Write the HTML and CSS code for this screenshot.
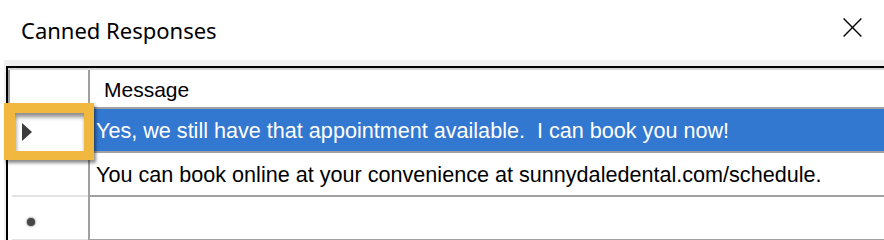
FILE: index.html
```html
<!DOCTYPE html>
<html lang="en">
<head>
<meta charset="utf-8">
<title>Canned Responses</title>
<link rel="stylesheet" href="styles.css">
</head>
<body>
<div class="titlebar">
  <span class="title">Canned Responses</span>
  <svg class="close" width="19" height="19" viewBox="0 0 19 19" aria-label="Close">
    <path d="M0.6 0.6 L18.4 18.4 M18.4 0.6 L0.6 18.4" stroke="#000" stroke-width="1.4" fill="none"/>
  </svg>
</div>
<div class="panel">
  <div class="grid">
    <div class="row row-header">
      <div class="rh"></div>
      <div class="cell">Message</div>
    </div>
    <div class="row selected">
      <div class="rh"><span class="current"></span></div>
      <div class="cell">Yes, we still have that appointment available.&nbsp; I can book you now!</div>
    </div>
    <div class="row">
      <div class="rh"></div>
      <div class="cell">You can book online at your convenience at sunnydaledental.com/schedule.</div>
    </div>
    <div class="row new-row">
      <div class="rh"><span class="new-mark"></span></div>
      <div class="cell"></div>
    </div>
  </div>
</div>
<div class="callout"></div>
</body>
</html>
```
FILE: styles.css
```css
html, body {
  margin: 0;
  padding: 0;
}
body {
  width: 884px;
  height: 240px;
  overflow: hidden;
  background: #ffffff;
  position: relative;
  font-family: "Liberation Sans", Arial, sans-serif;
  color: #000;
}
.titlebar {
  height: 60px;
  box-sizing: border-box;
  padding: 0 22px 0 21px;
  display: flex;
  align-items: center;
  justify-content: space-between;
}
.title {
  font-family: "Noto Sans", "Open Sans", sans-serif;
  font-size: 22px;
  color: #000;
}
.close {
  display: block;
  margin-top: -5px;
}
.panel {
  margin-left: 4px;
  height: 180px;
  box-sizing: border-box;
  padding: 6px 0 0 2px;
  background: #f0f0f0;
}
.grid {
  height: 100%;
  box-sizing: border-box;
  border-top: 2px solid #000;
  border-left: 2px solid #000;
  background: #fff;
  overflow: hidden;
}
.row {
  display: flex;
}
.rh {
  width: 82px;
  height: 44px;
  flex: none;
  box-sizing: border-box;
  border-right: 2px solid #a0a0a0;
  position: relative;
  display: flex;
  align-items: center;
}
.rh::after {
  content: "";
  position: absolute;
  left: 4px;
  right: 0;
  bottom: 0;
  height: 2px;
  background: #e3e3e3;
}
.cell {
  flex: 1;
  height: 44px;
  box-sizing: border-box;
  border-bottom: 2px solid #a0a0a0;
  display: flex;
  align-items: center;
  padding-left: 6px;
  padding-top: 2px;
  font-size: 21.6px;
  white-space: nowrap;
}
.row-header {
  border-top: 2px solid #d6d6d6;
}
.row-header .rh {
  height: 39px;
  border-left: 2px solid #a0a0a0;
  border-bottom: 2px solid #a0a0a0;
}
.row-header .rh::after {
  display: none;
}
.row-header .cell {
  height: 39px;
  padding-left: 14px;
  padding-top: 2px;
  font-size: 21px;
}
.selected .cell {
  background: #3378d0;
  color: #fff;
}
.current {
  width: 0;
  height: 0;
  margin-left: 14px;
  margin-top: 2px;
  border-left: 10px solid #3c3c3c;
  border-top: 9px solid transparent;
  border-bottom: 9px solid transparent;
}
.new-mark {
  width: 8px;
  height: 8px;
  margin-left: 19px;
  margin-top: 6px;
  border-radius: 50%;
  background: #464646;
  box-shadow: 0 0 1.5px 1px rgba(70, 70, 70, 0.4);
}
.callout {
  position: absolute;
  left: 4px;
  top: 103px;
  width: 90px;
  height: 57px;
  box-sizing: border-box;
  border-style: solid;
  border-color: #f0b83e;
  border-width: 10px 10px 9px 11px;
  box-shadow: 2px 3px 3px rgba(0, 0, 0, 0.45), inset 1px 4px 4px rgba(0, 0, 0, 0.45);
}
```
